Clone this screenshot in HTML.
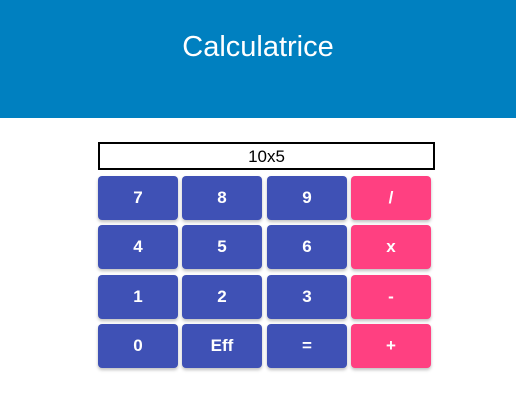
<!DOCTYPE html>
<html><head><style>
body{margin:0;width:516px;height:413px;background:#fff;font-family:"Liberation Sans",sans-serif;overflow:hidden;position:relative}
.hd{position:absolute;left:0;top:0;width:516px;height:118px;background:#0080c0;color:#fff;font-size:29px;text-align:center;line-height:94px}
.in{position:absolute;left:98px;top:142px;width:333px;height:24px;border:2px solid #000;text-align:center;font-size:17px;line-height:25px}
.b{position:absolute;width:80px;height:44px;border-radius:4px;background:#3f51b5;color:#fff;font-weight:bold;font-size:17px;text-align:center;line-height:44px;box-shadow:0 2px 3px rgba(0,0,0,.25)}
.p{background:#ff4081}
</style></head><body>
<div class="hd">Calculatrice</div>
<div class="in">10x5</div>
<div class="b" style="left:98px;top:176px">7</div><div class="b" style="left:182px;top:176px">8</div><div class="b" style="left:267px;top:176px">9</div><div class="b p" style="left:351px;top:176px">/</div>
<div class="b" style="left:98px;top:225px">4</div><div class="b" style="left:182px;top:225px">5</div><div class="b" style="left:267px;top:225px">6</div><div class="b p" style="left:351px;top:225px">x</div>
<div class="b" style="left:98px;top:275px">1</div><div class="b" style="left:182px;top:275px">2</div><div class="b" style="left:267px;top:275px">3</div><div class="b p" style="left:351px;top:275px">-</div>
<div class="b" style="left:98px;top:324px">0</div><div class="b" style="left:182px;top:324px">Eff</div><div class="b" style="left:267px;top:324px">=</div><div class="b p" style="left:351px;top:324px">+</div>
</body></html>
